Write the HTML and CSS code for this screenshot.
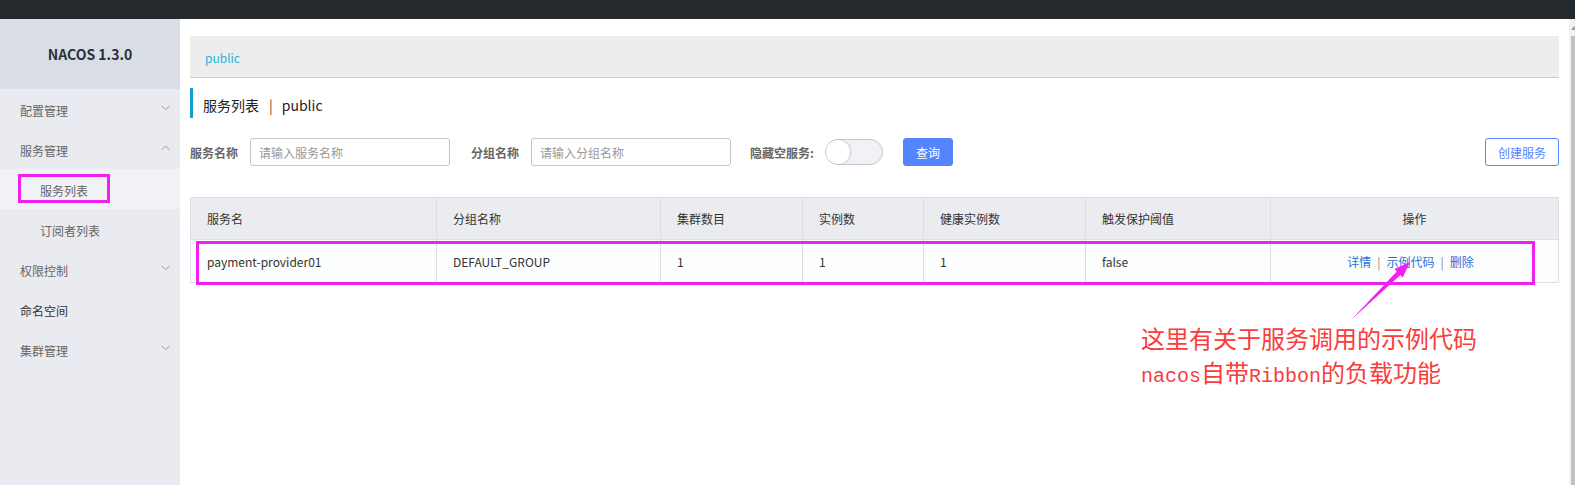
FILE: index.html
```html
<!DOCTYPE html>
<html lang="zh-CN">
<head>
<meta charset="utf-8">
<title>Nacos</title>
<link rel="stylesheet" href="styles.css">
</head>
<body>
<div class="topbar"></div>
<div class="layout">
  <aside class="sidebar">
    <div class="brand">NACOS 1.3.0</div>
    <ul class="menu">
      <li class="item"><span>配置管理</span><svg class="chev" width="9" height="6" viewBox="0 0 9 6"><path d="M0.5 0.8 L4.5 4.8 L8.5 0.8" fill="none" stroke="#999" stroke-width="1"/></svg></li>
      <li class="item"><span>服务管理</span><svg class="chev" width="9" height="6" viewBox="0 0 9 6"><path d="M0.5 5 L4.5 1 L8.5 5" fill="none" stroke="#999" stroke-width="1"/></svg></li>
      <li class="item sub active"><span>服务列表</span></li>
      <li class="item sub"><span>订阅者列表</span></li>
      <li class="item"><span>权限控制</span><svg class="chev" width="9" height="6" viewBox="0 0 9 6"><path d="M0.5 0.8 L4.5 4.8 L8.5 0.8" fill="none" stroke="#999" stroke-width="1"/></svg></li>
      <li class="item dark"><span>命名空间</span></li>
      <li class="item"><span>集群管理</span><svg class="chev" width="9" height="6" viewBox="0 0 9 6"><path d="M0.5 0.8 L4.5 4.8 L8.5 0.8" fill="none" stroke="#999" stroke-width="1"/></svg></li>
    </ul>
  </aside>
  <main class="main">
    <div class="crumb"><span class="ns">public</span></div>
    <div class="title"><span>服务列表</span><span class="sep">|</span><span>public</span></div>
    <div class="search">
      <label class="lbl">服务名称</label>
      <div class="input">请输入服务名称</div>
      <label class="lbl">分组名称</label>
      <div class="input second">请输入分组名称</div>
      <label class="lbl">隐藏空服务:</label>
      <div class="toggle"><div class="knob"></div></div>
      <button class="btn primary">查询</button>
      <button class="btn outline">创建服务</button>
    </div>
    <table class="grid">
      <colgroup>
        <col style="width:246px"><col style="width:224px"><col style="width:142px"><col style="width:121px"><col style="width:162px"><col style="width:185px"><col style="width:288px">
      </colgroup>
      <thead>
        <tr><th>服务名</th><th>分组名称</th><th>集群数目</th><th>实例数</th><th>健康实例数</th><th>触发保护阈值</th><th class="center">操作</th></tr>
      </thead>
      <tbody>
        <tr><td>payment-provider01</td><td>DEFAULT_GROUP</td><td>1</td><td>1</td><td>1</td><td>false</td><td class="center ops"><a>详情</a><span class="bar">|</span><a>示例代码</a><span class="bar">|</span><a>删除</a></td></tr>
      </tbody>
    </table>
  </main>
  <div class="scrollbar"><div class="arrow"></div><div class="thumb"></div></div>
</div>

<div class="mark mark-menu"></div>
<div class="mark mark-row"></div>
<svg class="pointer" width="80" height="80" viewBox="1340 255 80 80">
  <polygon points="1351,320 1396.8,271.4 1394.4,268.9 1410,262 1402.8,277.5 1400.4,275.0" fill="#f020f0"/>
</svg>
<div class="note">
  <div>这里有关于服务调用的示例代码</div>
  <div><span class="mono">nacos</span>自带<span class="mono">Ribbon</span>的负载功能</div>
</div>
</body>
</html>
```
FILE: styles.css
```css
* { box-sizing: border-box; }
html, body { margin: 0; padding: 0; }
body {
  position: relative;
  width: 1575px;
  height: 485px;
  overflow: hidden;
  font-family: "Noto Sans CJK SC", "Noto Sans", sans-serif;
  font-size: 12px;
  color: #333;
  background: #fff;
}
.topbar { height: 19px; background: #24292e; }
.layout { display: flex; height: 466px; }

.sidebar { width: 180px; flex: none; background: #e9ebf0; }
.brand {
  height: 70px;
  background: #d9dde4;
  display: flex;
  align-items: center;
  justify-content: center;
  font-weight: bold;
  font-size: 14px;
  color: #2b2f36;
}
.menu { list-style: none; margin: 0; padding: 0; }
.item {
  height: 40px;
  padding: 2px 10px 0 20px;
  display: flex;
  align-items: center;
  justify-content: space-between;
  color: #666;
  font-size: 12px;
}
.item.dark { color: #333; }
.item.sub { padding-left: 40px; }
.item.active { background: #f1f2f5; }
.chev { margin-top: -4px; }

.main { flex: 1; padding: 17px 10px 0 10px; background: #fff; }
.crumb {
  height: 42px;
  background: #ededed;
  border-bottom: 1px solid #cdcdcd;
  display: flex;
  align-items: center;
  padding: 2px 0 0 15px;
}
.ns { color: #2cb4dc; font-size: 12px; }
.title {
  margin-top: 10px;
  height: 30px;
  border-left: 3px solid #159bd6;
  padding: 4px 0 0 10px;
  display: flex;
  align-items: center;
  font-size: 14px;
  color: #222;
}
.title .sep { margin: 0 9px 0 10px; color: #7a4a1a; }

.search { margin-top: 20px; display: flex; align-items: center; height: 28px; }
.lbl { font-weight: bold; color: #666; margin-right: 12px; }
.input {
  width: 200px;
  height: 28px;
  border: 1px solid #c4c6cf;
  border-radius: 3px;
  padding-left: 8px;
  display: flex;
  align-items: center;
  color: #999;
  margin-right: 21px;
}
.input.second { margin-right: 19px; }
.toggle {
  width: 58px;
  height: 26px;
  border: 1px solid #c4c6cf;
  border-radius: 13px;
  background: #f1f2f6;
  margin-left: -1px;
  margin-right: 20px;
  position: relative;
}
.knob {
  width: 24px;
  height: 24px;
  border-radius: 50%;
  background: #fff;
  box-shadow: 1px 0 2px rgba(0,0,0,0.18);
}
.btn {
  height: 28px;
  border-radius: 3px;
  font-family: inherit;
  font-size: 12px;
  padding: 0;
  cursor: pointer;
}
.btn.primary { width: 50px; background: #5584ff; border: 1px solid #5584ff; color: #fff; }
.btn.outline { width: 74px; margin-left: auto; background: #fff; border: 1px solid #5584ff; color: #5584ff; }

.grid {
  margin-top: 31px;
  width: 1368px;
  table-layout: fixed;
  border-collapse: collapse;
  border: 1px solid #dcdee3;
}
.grid th, .grid td {
  border: 1px solid #dcdee3;
  text-align: left;
  font-weight: normal;
  padding: 0 16px;
  font-size: 12px;
  color: #333;
}
.grid th { height: 42px; background: #ebecf0; }
.grid td { height: 43px; background: #fcfefe; }
.grid .center { text-align: center; }
.grid td.ops { padding-right: 24px; padding-left: 16px; }
.ops a { color: #2f6fd8; }
.ops .bar { color: #888; margin: 0 6px; }

.scrollbar { width: 7px; flex: none; background: #f1f1f1; padding-left: 2px; padding-top: 17px; position: relative; }
.scrollbar .arrow {
  position: absolute;
  top: 7px;
  left: 2px;
  width: 0; height: 0;
  border-left: 3px solid transparent;
  border-right: 3px solid transparent;
  border-bottom: 4px solid #a3a3a3;
}
.scrollbar .thumb { height: 100%; background: #c1c1c1; }

.mark { position: absolute; border: 3px solid #f020f0; }
.mark-menu { left: 18px; top: 174px; width: 92px; height: 29px; }
.mark-row { left: 196px; top: 241px; width: 1339px; height: 44px; }
.pointer { position: absolute; left: 1340px; top: 255px; }
.note {
  position: absolute;
  left: 1141px;
  top: 321px;
  font-size: 24px;
  line-height: 34px;
  color: #fa3c3c;
  font-family: "Noto Sans CJK SC", sans-serif;
  white-space: nowrap;
}
.note .mono { font-family: "Liberation Mono", monospace; font-size: 20px; }
```
